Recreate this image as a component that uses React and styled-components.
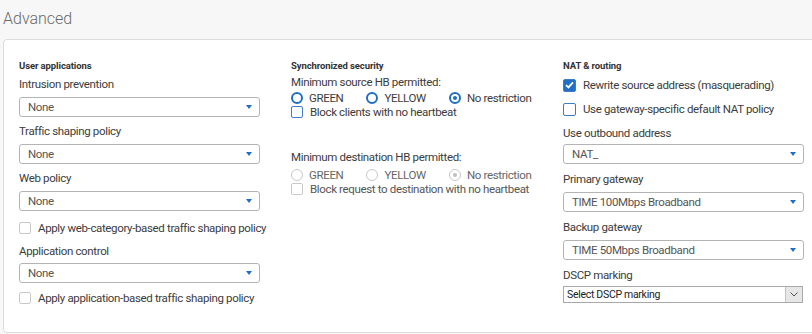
import React from 'react'
import styled, { createGlobalStyle } from 'styled-components'

const GlobalStyle = createGlobalStyle`
  html, body {
    margin: 0;
    padding: 0;
    background: #f7f7f7;
    overflow: hidden;
  }
  body {
    font-family: Roboto, "Liberation Sans", Arial, sans-serif;
    color: #3c3c3c;
  }
`

const Page = styled.div`
  width: 812px;
  height: 334px;
  overflow: hidden;
`

const Title = styled.h2`
  margin: 0;
  padding: 8px 0 0 3px;
  height: 39px;
  box-sizing: border-box;
  font-size: 16px;
  font-weight: 300;
  color: #6a6a6a;
  line-height: 22px;
`

const Card = styled.div`
  margin-left: 3px;
  width: 840px;
  height: 294px;
  box-sizing: border-box;
  background: #fff;
  border: 1px solid #dcdcdc;
  border-radius: 4px;
  padding: 20px 0 0 15px;
  display: grid;
  grid-template-columns: 272px 272px 272px;
`

const Column = styled.div`
  display: flex;
  flex-direction: column;
`

const Heading = styled.div`
  font-size: 9.5px;
  font-weight: 700;
  letter-spacing: -0.1px;
  color: #333;
  line-height: 12px;
  margin-bottom: ${p => p.$mb ?? 5}px;
`

const Label = styled.div`
  font-size: 11.5px;
  letter-spacing: -0.35px;
  line-height: 14px;
  color: ${p => (p.$muted ? '#666' : '#3c3c3c')};
  margin-bottom: ${p => p.$gap ?? 6}px;
`

const SelectBox = styled.div`
  width: 241px;
  height: 20px;
  box-sizing: border-box;
  border: 1px solid #b4b4b4;
  border-radius: 3px;
  display: flex;
  align-items: center;
  justify-content: space-between;
  padding: 0 7px 0 8px;
  font-size: 11.5px;
  letter-spacing: -0.35px;
  color: #555;
  margin-bottom: ${p => p.$mb ?? 8}px;
`

const Caret = styled.span`
  width: 0;
  height: 0;
  border-left: 3.5px solid transparent;
  border-right: 3.5px solid transparent;
  border-top: 4px solid #1f6fc6;
`

const NativeSelect = styled.div`
  width: 240px;
  height: 17px;
  box-sizing: border-box;
  border: 1px solid #a9a9a9;
  display: flex;
  align-items: stretch;
  font-size: 10.5px;
  letter-spacing: -0.3px;
  color: #222;
`

const NativeText = styled.span`
  flex: 1;
  padding-left: 3px;
  line-height: 15px;
`

const NativeButton = styled.span`
  width: 16px;
  background: #e6e6e6;
  border-left: 1px solid #c4c4c4;
  display: flex;
  align-items: center;
  justify-content: center;
`

const CheckRow = styled.label`
  display: flex;
  align-items: center;
  gap: 7px;
  font-size: 11.5px;
  letter-spacing: -0.35px;
  line-height: 14px;
  color: ${p => (p.$muted ? '#555' : '#3c3c3c')};
  margin-bottom: ${p => p.$mb ?? 0}px;
`

const Box = styled.span`
  width: ${p => p.$size}px;
  height: ${p => p.$size}px;
  box-sizing: border-box;
  flex: none;
  border-radius: 2px;
  border: 1px solid ${p => (p.$tone === 'blue' ? '#3f7cc4' : '#c9c9c9')};
  background: ${p => (p.$checked ? '#1f6fc6' : '#fff')};
  display: flex;
  align-items: center;
  justify-content: center;
`

const RadioGroup = styled.div`
  display: flex;
  align-items: center;
  height: 15px;
`

const RadioItem = styled.span`
  display: flex;
  align-items: center;
  gap: 6px;
  margin-right: 23px;
  font-size: 11.5px;
  letter-spacing: -0.35px;
  color: ${p => (p.$disabled ? '#666' : '#3c3c3c')};
`

const Circle = styled.span`
  width: 12px;
  height: 12px;
  box-sizing: border-box;
  border-radius: 50%;
  border: ${p => (p.$disabled ? '1px solid #c8c8c8' : '2px solid #1f6fc6')};
  display: flex;
  align-items: center;
  justify-content: center;
  &::after {
    content: '';
    display: ${p => (p.$on ? 'block' : 'none')};
    width: 4px;
    height: 4px;
    border-radius: 50%;
    background: ${p => (p.$disabled ? '#c0c0c0' : '#1f6fc6')};
  }
`

const Spacer = styled.div`
  height: ${p => p.$h}px;
`

const Select = ({ value, mb }) => (
  <SelectBox $mb={mb}>
    <span>{value}</span>
    <Caret />
  </SelectBox>
)

const Check = ({ label, checked, tone, muted, mb, size = 12 }) => (
  <CheckRow $muted={muted} $mb={mb}>
    <Box $size={size} $checked={checked} $tone={checked ? 'blue' : tone}>
      {checked && (
        <svg width="9" height="8" viewBox="0 0 9 8">
          <path d="M1 4.2 L3.4 6.4 L8 1.4" fill="none" stroke="#fff" strokeWidth="1.8" />
        </svg>
      )}
    </Box>
    {label}
  </CheckRow>
)

const Radios = ({ disabled }) => (
  <RadioGroup>
    <RadioItem $disabled={disabled}><Circle $disabled={disabled} />GREEN</RadioItem>
    <RadioItem $disabled={disabled}><Circle $disabled={disabled} />YELLOW</RadioItem>
    <RadioItem $disabled={disabled}><Circle $disabled={disabled} $on />No restriction</RadioItem>
  </RadioGroup>
)

export default function App() {
  return (
    <Page>
      <GlobalStyle />
      <Title>Advanced</Title>
      <Card>
        <Column>
          <Heading>User applications</Heading>
          <Label>Intrusion prevention</Label>
          <Select value="None" mb={7} />
          <Label>Traffic shaping policy</Label>
          <Select value="None" mb={7} />
          <Label>Web policy</Label>
          <Select value="None" mb={10} />
          <Check label="Apply web-category-based traffic shaping policy" mb={9} />
          <Label $gap={5}>Application control</Label>
          <Select value="None" mb={8} />
          <Check label="Apply application-based traffic shaping policy" />
        </Column>
        <Column>
          <Heading $mb={3}>Synchronized security</Heading>
          <Label $gap={1}>Minimum source HB permitted:</Label>
          <Radios />
          <Check label="Block clients with no heartbeat" tone="blue" />
          <Spacer $h={31} />
          <Label $gap={3}>Minimum destination HB permitted:</Label>
          <Radios disabled />
          <Check label="Block request to destination with no heartbeat" muted />
        </Column>
        <Column>
          <Heading $mb={6}>NAT &amp; routing</Heading>
          <Check label="Rewrite source address (masquerading)" checked size={13} mb={10} />
          <Check label="Use gateway-specific default NAT policy" tone="blue" size={13} mb={10} />
          <Label $gap={4}>Use outbound address</Label>
          <Select value="NAT_" mb={8} />
          <Label>Primary gateway</Label>
          <Select value="TIME 100Mbps Broadband" mb={8} />
          <Label>Backup gateway</Label>
          <Select value="TIME 50Mbps Broadband" mb={8} />
          <Label $gap={4}>DSCP marking</Label>
          <NativeSelect>
            <NativeText>Select DSCP marking</NativeText>
            <NativeButton>
              <svg width="8" height="5" viewBox="0 0 8 5">
                <path d="M0.5 0.5 L4 4 L7.5 0.5" fill="none" stroke="#555" strokeWidth="1" />
              </svg>
            </NativeButton>
          </NativeSelect>
        </Column>
      </Card>
    </Page>
  )
}
